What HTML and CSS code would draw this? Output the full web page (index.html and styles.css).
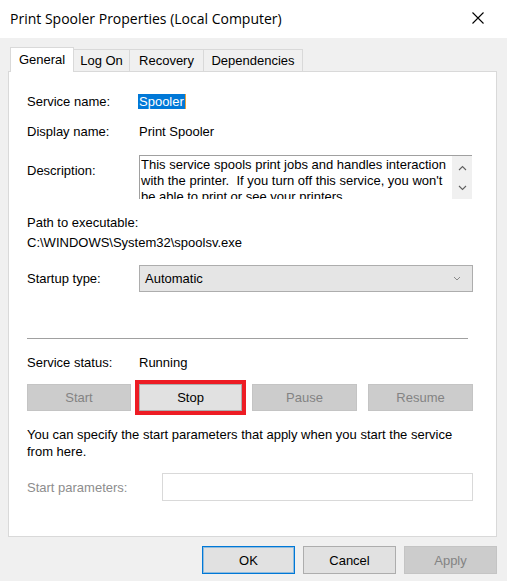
FILE: index.html
```html
<!DOCTYPE html>
<html>
<head>
<meta charset="utf-8">
<link rel="stylesheet" href="styles.css">
</head>
<body>
<div class="window">
  <div class="titlebar">
    <span class="title">Print Spooler Properties (Local Computer)</span>
    <span class="close"><svg width="12" height="12" viewBox="0 0 12 12"><path d="M0.5 0.5L11.5 11.5M11.5 0.5L0.5 11.5" stroke="#000" stroke-width="1.1" fill="none"/></svg></span>
  </div>
  <div class="content">
    <div class="tabs">
      <div class="tab tab-active tab-general">General</div>
      <div class="tab tab-logon">Log On</div>
      <div class="tab tab-recovery">Recovery</div>
      <div class="tab tab-deps">Dependencies</div>
    </div>
    <div class="panel">
      <div class="row row-name"><span class="label">Service name:</span><span class="sel">Spooler</span></div>
      <div class="row row-display"><span class="label">Display name:</span><span class="value">Print Spooler</span></div>
      <div class="row row-desc">
        <span class="label label-desc">Description:</span>
        <div class="descbox">
          <div class="desctext">This service spools print jobs and handles interaction with the printer.&nbsp; If you turn off this service, you won't be able to print or see your printers.</div>
          <div class="vscroll">
            <svg width="9" height="6" viewBox="0 0 9 6"><path d="M1 5L4.5 1.5L8 5" stroke="#606060" stroke-width="1.1" fill="none"/></svg>
            <svg width="9" height="6" viewBox="0 0 9 6"><path d="M1 1L4.5 4.5L8 1" stroke="#606060" stroke-width="1.1" fill="none"/></svg>
          </div>
        </div>
      </div>
      <div class="path">
        <div>Path to executable:</div>
        <div>C:\WINDOWS\System32\spoolsv.exe</div>
      </div>
      <div class="row row-startup">
        <span class="label">Startup type:</span>
        <div class="combo">
          <span>Automatic</span>
          <svg width="8" height="5" viewBox="0 0 8 5"><path d="M1 1L4 4L7 1" stroke="#8a8a8a" stroke-width="1" fill="none"/></svg>
        </div>
      </div>
      <div class="sep"></div>
      <div class="row row-status"><span class="label">Service status:</span><span class="value">Running</span></div>
      <div class="btnrow">
        <button class="btn btn-disabled btn-start">Start</button>
        <button class="btn btn-stop">Stop</button>
        <button class="btn btn-disabled btn-pause">Pause</button>
        <button class="btn btn-disabled btn-resume">Resume</button>
      </div>
      <p class="hint">You can specify the start parameters that apply when you start the service<br>from here.</p>
      <div class="row row-params">
        <span class="label label-muted">Start parameters:</span>
        <div class="textinput"></div>
      </div>
    </div>
    <div class="footer">
      <button class="btn btn-ok">OK</button>
      <button class="btn btn-cancel">Cancel</button>
      <button class="btn btn-disabled btn-apply">Apply</button>
    </div>
  </div>
</div>
</body>
</html>
```
FILE: styles.css
```css
* { box-sizing: border-box; }
html, body {
  margin: 0;
  padding: 0;
  background: #f0f0f0;
}
body {
  width: 507px;
  height: 581px;
  overflow: hidden;
  font-family: "Liberation Sans", Arial, sans-serif;
  font-size: 13px;
  color: #000;
}
.window {
  width: 507px;
  height: 581px;
  background: #f0f0f0;
}
.titlebar {
  height: 38px;
  background: #fff;
  display: flex;
  align-items: center;
  justify-content: space-between;
  padding: 0 23px 2px 10px;
}
.title {
  font-family: "Open Sans", "Noto Sans", sans-serif;
  font-size: 14px;
  color: #000;
  letter-spacing: 0;
}
.close {
  display: flex;
  width: 12px;
  height: 12px;
}
.content {
  padding: 9px 10px 0 8px;
}
.tabs {
  display: flex;
  align-items: flex-end;
  margin-left: 2px;
  height: 24px;
}
.tab {
  height: 22px;
  line-height: 21px;
  text-align: center;
  border: 1px solid #d9d9d9;
  border-bottom: none;
  background: #f0f0f0;
  margin-left: -1px;
}
.tab-active {
  height: 25px;
  line-height: 24px;
  background: #fff;
  margin-left: 0;
  margin-bottom: -1px;
  position: relative;
  z-index: 1;
}
.tab-general { width: 64px; }
.tab-logon { width: 57px; }
.tab-recovery { width: 75px; }
.tab-deps { width: 100px; }
.panel {
  background: #fff;
  border: 1px solid #d9d9d9;
  padding: 22px 0 35px 18px;
}
.row {
  display: flex;
  align-items: center;
  line-height: 15px;
}
.label {
  width: 112px;
  flex: none;
}
.sel {
  background: #0078d7;
  color: #fff;
  padding: 0 1px;
  margin-left: -1px;
  border-right: 1px solid #e8a13a;
}
.row-display { margin-top: 15px; }
.row-desc {
  margin-top: 16px;
  align-items: flex-start;
}
.label-desc { padding-top: 8px; }
.descbox {
  width: 333px;
  height: 44px;
  border-top: 1px solid #a0a0a0;
  border-left: 1px solid #a0a0a0;
  display: flex;
  overflow: hidden;
}
.desctext {
  flex: 1;
  padding: 1px 0 0 1px;
  line-height: 16px;
  white-space: normal;
}
.vscroll {
  width: 20px;
  flex: none;
  background: #f0f0f0;
  display: flex;
  flex-direction: column;
  align-items: center;
  padding-top: 9px;
  gap: 14px;
}
.vscroll svg { display: block; }
.path {
  margin-top: 14px;
  line-height: 20px;
}
.row-startup { margin-top: 12px; }
.combo {
  width: 334px;
  height: 27px;
  background: #e5e5e5;
  border: 1px solid #adadad;
  display: flex;
  align-items: center;
  justify-content: space-between;
  padding: 0 11px 0 5px;
}
.combo svg { display: block; }
.sep {
  margin-top: 46px;
  width: 441px;
  height: 2px;
  border-top: 1px solid #a0a0a0;
  border-bottom: 1px solid #ffffff;
}
.row-status { margin-top: 15px; }
.btnrow {
  display: flex;
  margin-top: 14px;
}
.btn {
  font-family: "Liberation Sans", Arial, sans-serif;
  font-size: 13px;
  height: 27px;
  padding: 0;
  margin: 0;
  background: #e1e1e1;
  border: 1px solid #adadad;
  color: #000;
  border-radius: 0;
}
.btn-disabled {
  background: #cccccc;
  border-color: #c4c4c4;
  color: #838383;
}
.btn-start { width: 104px; }
.btn-stop {
  width: 103px;
  margin-left: 8px;
  outline: 4px solid #ed1c24;
}
.btn-pause { width: 105px; margin-left: 10px; }
.btn-resume { width: 105px; margin-left: 11px; }
.hint {
  margin: 15px 0 0 0;
  line-height: 17px;
}
.row-params { margin-top: 13px; }
.label-muted {
  color: #8d8d8d;
  width: 135px;
}
.textinput {
  width: 311px;
  height: 28px;
  background: #fff;
  border: 1px solid #d9d9d9;
}
.footer {
  display: flex;
  justify-content: flex-end;
  gap: 8px;
  margin-top: 9px;
}
.footer .btn {
  width: 93px;
  height: 28px;
}
.btn-ok {
  border-color: #0078d7;
  box-shadow: inset 0 0 0 1px rgba(0, 120, 215, 0.35);
}
```
